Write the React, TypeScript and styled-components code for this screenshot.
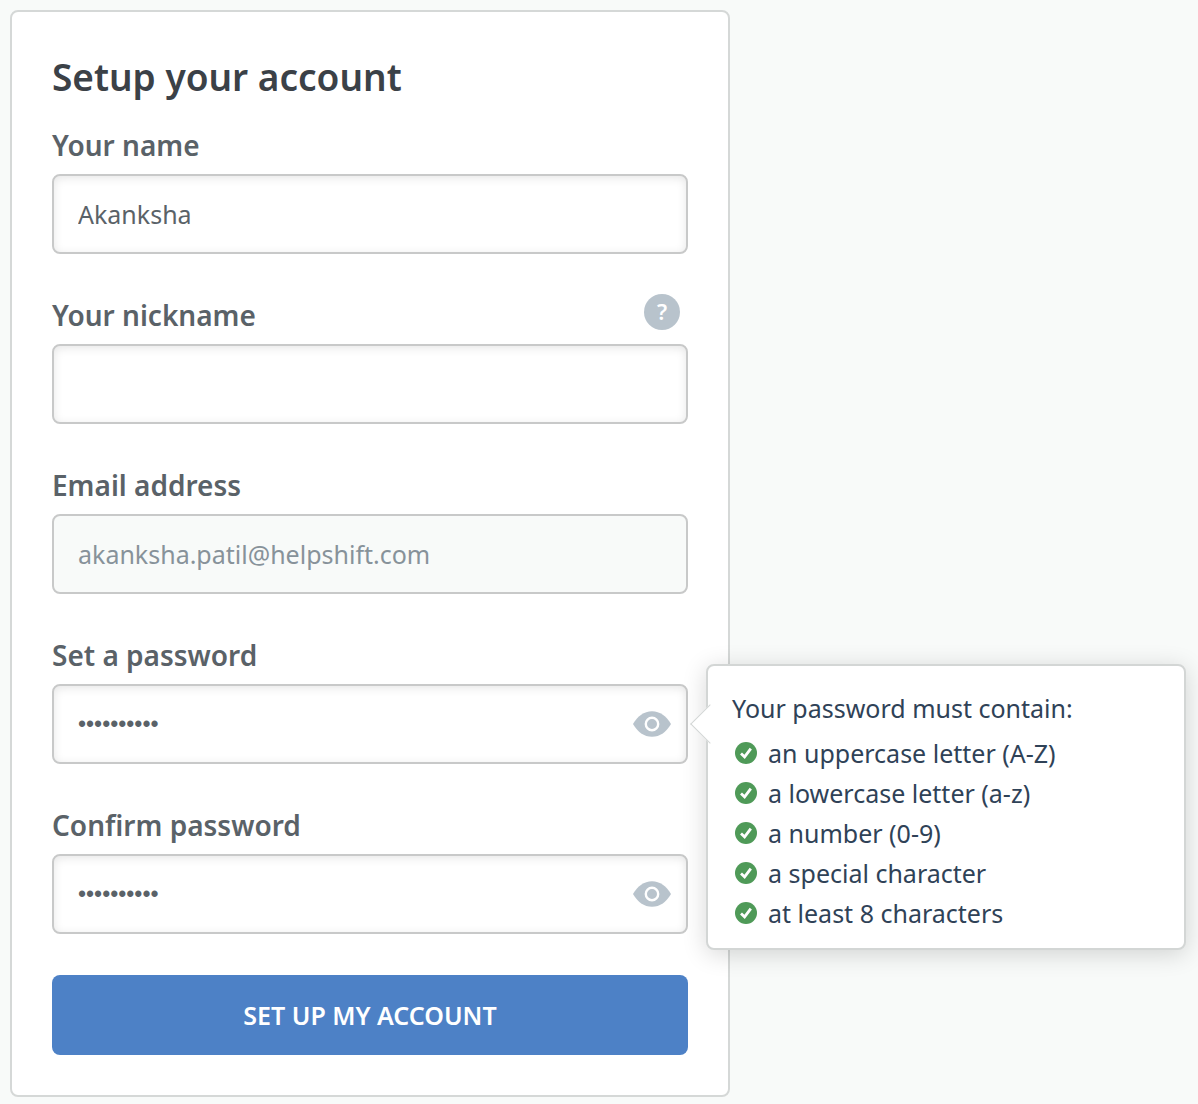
import { useState } from "react";
import type { FormEvent } from "react";
import styled, { createGlobalStyle } from "styled-components";

const GlobalStyle = createGlobalStyle`
  *, *::before, *::after { box-sizing: border-box; }
  body {
    margin: 0;
    background: #f8faf9;
    font-family: "Noto Sans", "Open Sans", sans-serif;
    color: #5a6268;
  }
  button, input { font-family: inherit; }
`;

const Page = styled.main`
  padding: 10px 10px 0;
`;

const Card = styled.form`
  width: 100%;
  max-width: 720px;
  padding: 40px;
  background: #fff;
  border: 2px solid #d5d8d7;
  border-radius: 8px;
`;

const Title = styled.h1`
  margin: 0 0 22px;
  font-size: 37px;
  line-height: 50px;
  font-weight: 600;
  color: #3b4147;
`;

const Fields = styled.div`
  display: flex;
  flex-direction: column;
  gap: 40px;
`;

const LabelRow = styled.div`
  display: flex;
  justify-content: space-between;
  align-items: flex-start;
  height: 50px;
  padding-right: 8px;
`;

const Label = styled.label`
  font-size: 28px;
  line-height: 42px;
  font-weight: 600;
`;

const HelpButton = styled.button`
  width: 36px;
  height: 36px;
  padding: 0 0 2px;
  border: 0;
  border-radius: 50%;
  background: #b8c3cc;
  color: #fff;
  font-size: 22px;
  line-height: 34px;
  font-weight: 600;
`;

const Control = styled.div`
  position: relative;
  display: flex;
`;

const Input = styled.input<{ $masked?: boolean }>`
  flex: 1;
  min-width: 0;
  height: 80px;
  padding: 0 24px;
  border: 2px solid #c8c9c9;
  border-radius: 8px;
  background: #fff;
  box-shadow: inset 0 2px 10px rgba(0, 0, 0, 0.1);
  color: #5a6268;
  font-family: ${(p) => (p.$masked ? '"Liberation Sans", sans-serif' : "inherit")};
  font-size: ${(p) => (p.$masked ? 23 : 25)}px;
  outline: 0;

  &:disabled {
    background: #f8faf9;
    box-shadow: none;
    color: #87929a;
  }
`;

const RevealButton = styled.button`
  position: absolute;
  top: 0;
  right: 16px;
  display: grid;
  place-items: center;
  width: 40px;
  height: 100%;
  padding: 0;
  border: 0;
  background: none;
`;

const Submit = styled.button`
  width: 100%;
  height: 80px;
  margin-top: 41px;
  border: 0;
  border-radius: 8px;
  background: #4d81c6;
  color: #fff;
  font-size: 25px;
  font-weight: 600;
  text-transform: uppercase;
`;

const Popover = styled.div`
  position: absolute;
  z-index: 1;
  top: -20px;
  left: calc(100% + 18px);
  width: 480px;
  padding: 22px 24px 15px;
  background: #fff;
  border: 2px solid #d3d6d5;
  border-radius: 8px;
  box-shadow: 0 4px 24px rgba(0, 0, 0, 0.16);
  color: #2f4257;
  font-size: 25px;
  line-height: 40px;

  &::before {
    content: "";
    position: absolute;
    top: 44px;
    left: -12px;
    width: 28px;
    height: 28px;
    background: #fff;
    border: solid #d3d6d5;
    border-width: 0 0 1px 1px;
    transform: rotate(45deg);
  }
`;

const PopoverTitle = styled.p`
  position: relative;
  margin: 0 0 5px;
`;

const Rules = styled.ul`
  margin: 0;
  padding: 0;
  list-style: none;
`;

const Rule = styled.li`
  display: flex;
  align-items: center;
  gap: 11px;
  padding-left: 3px;
`;

const EyeIcon = () => (
  <svg width="38" height="26" viewBox="0 0 38 26" aria-hidden="true">
    <path
      d="M0 13C4.5 5 11 0.2 19 0.2S33.500 5 38 13C33.500 21 27 25.800 19 25.800S4.500 21 0 13Z"
      fill="#b8c3cc"
    />
    <circle cx="19" cy="13" r="6.200" fill="none" stroke="#fff" strokeWidth="2.400" />
  </svg>
);

const CheckIcon = () => (
  <svg width="22" height="22" viewBox="0 0 22 22" aria-hidden="true">
    <circle cx="11" cy="11" r="11" fill="#4f9a58" />
    <path d="M6 11.400L9.600 14.800L15.800 6.600" fill="none" stroke="#fff" strokeWidth="2.800" />
  </svg>
);

const rules = [
  "an uppercase letter (A-Z)",
  "a lowercase letter (a-z)",
  "a number (0-9)",
  "a special character",
  "at least 8 characters",
];

function PasswordHints() {
  return (
    <Popover id="password-rules">
      <PopoverTitle>Your password must contain:</PopoverTitle>
      <Rules>
        {rules.map((rule) => (
          <Rule key={rule}>
            <CheckIcon />
            {rule}
          </Rule>
        ))}
      </Rules>
    </Popover>
  );
}

interface PasswordFieldProps {
  id: string;
  label: string;
  hints?: boolean;
}

function PasswordField({ id, label, hints }: PasswordFieldProps) {
  const [visible, setVisible] = useState(false);
  return (
    <div>
      <LabelRow>
        <Label htmlFor={id}>{label}</Label>
      </LabelRow>
      <Control>
        <Input
          id={id}
          type={visible ? "text" : "password"}
          defaultValue="Passw0rd!1"
          $masked={!visible}
          aria-describedby={hints ? "password-rules" : undefined}
        />
        <RevealButton
          type="button"
          aria-label={visible ? "Hide password" : "Show password"}
          onClick={() => setVisible(!visible)}
        >
          <EyeIcon />
        </RevealButton>
        {hints && <PasswordHints />}
      </Control>
    </div>
  );
}

export default function App() {
  const submit = (event: FormEvent) => event.preventDefault();
  return (
    <Page>
      <GlobalStyle />
      <Card onSubmit={submit}>
        <Title>Setup your account</Title>
        <Fields>
          <div>
            <LabelRow>
              <Label htmlFor="name">Your name</Label>
            </LabelRow>
            <Control>
              <Input id="name" type="text" defaultValue="Akanksha" />
            </Control>
          </div>
          <div>
            <LabelRow>
              <Label htmlFor="nickname">Your nickname</Label>
              <HelpButton type="button" aria-label="About nicknames">
                ?
              </HelpButton>
            </LabelRow>
            <Control>
              <Input id="nickname" type="text" />
            </Control>
          </div>
          <div>
            <LabelRow>
              <Label htmlFor="email">Email address</Label>
            </LabelRow>
            <Control>
              <Input id="email" type="email" defaultValue="akanksha.patil@helpshift.com" disabled />
            </Control>
          </div>
          <PasswordField id="password" label="Set a password" hints />
          <PasswordField id="confirm" label="Confirm password" />
        </Fields>
        <Submit type="submit">Set up my account</Submit>
      </Card>
    </Page>
  );
}
